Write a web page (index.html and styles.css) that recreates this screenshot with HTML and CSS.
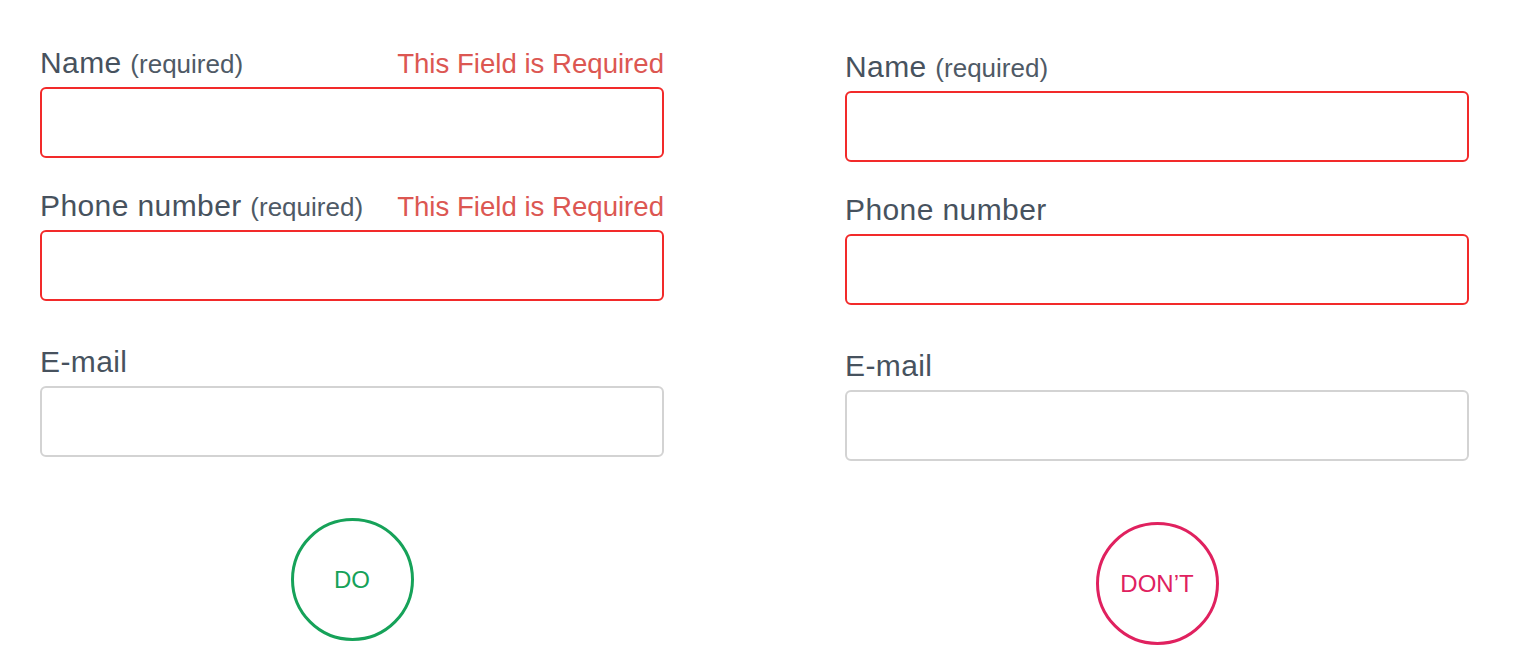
FILE: index.html
```html
<!doctype html>
<html>
<head>
<meta charset="utf-8">
<title>Form validation</title>
<link rel="stylesheet" href="styles.css">
</head>
<body>
<section class="page">
	<div class="col">
		<div class="group">
			<div class="label-row">
				<label>Name <small>(required)</small></label>
				<span class="error">This Field is Required</span>
			</div>
			<input type="text" class="field invalid">
		</div>
		<div class="group">
			<div class="label-row">
				<label>Phone number <small>(required)</small></label>
				<span class="error">This Field is Required</span>
			</div>
			<input type="text" class="field invalid">
		</div>
		<div class="group group-last">
			<div class="label-row">
				<label>E-mail</label>
			</div>
			<input type="text" class="field">
		</div>
		<div class="badge do">DO</div>
	</div>
	<div class="col col-right">
		<div class="group">
			<div class="label-row">
				<label>Name <small>(required)</small></label>
			</div>
			<input type="text" class="field invalid">
		</div>
		<div class="group">
			<div class="label-row">
				<label>Phone number</label>
			</div>
			<input type="text" class="field invalid">
		</div>
		<div class="group group-last">
			<div class="label-row">
				<label>E-mail</label>
			</div>
			<input type="text" class="field">
		</div>
		<div class="badge dont">DON’T</div>
	</div>
</section>
</body>
</html>
```

FILE: styles.css
```css
body {
	margin: 0;
	background: #fff;
	font-family: "Liberation Sans", Arial, sans-serif;
}
.page {
	display: flex;
	gap: 181px;
	padding: 45px 40px 0;
}
.col {
	width: 624px;
	display: flex;
	flex-direction: column;
}
.col-right {
	padding-top: 4px;
}
.group {
	margin-bottom: 30px;
}
.group-last {
	margin-top: 13px;
	margin-bottom: 61px;
}
.label-row {
	display: flex;
	justify-content: space-between;
	align-items: baseline;
	height: 36px;
	line-height: 36px;
	margin-bottom: 6px;
}
.label-row label {
	font-size: 30px;
	letter-spacing: 0.4px;
	color: #47525e;
}
.label-row small {
	font-size: 26px;
	letter-spacing: 0;
	color: #4f5a66;
}
.error {
	font-size: 27.6px;
	color: #dc5752;
}
.field {
	display: block;
	box-sizing: border-box;
	width: 100%;
	height: 71px;
	margin: 0;
	border: 2px solid #d3d3d3;
	border-radius: 6px;
	background: #fff;
	outline: none;
}
.field.invalid {
	border-color: #f22a2a;
}
.badge {
	box-sizing: border-box;
	width: 123px;
	height: 123px;
	margin: 0 auto;
	border-radius: 50%;
	border: 3.5px solid;
	display: flex;
	align-items: center;
	justify-content: center;
	font-size: 24px;
}
.do {
	color: #16a259;
	border-color: #16a259;
}
.dont {
	color: #e0215f;
	border-color: #e0215f;
}
```
